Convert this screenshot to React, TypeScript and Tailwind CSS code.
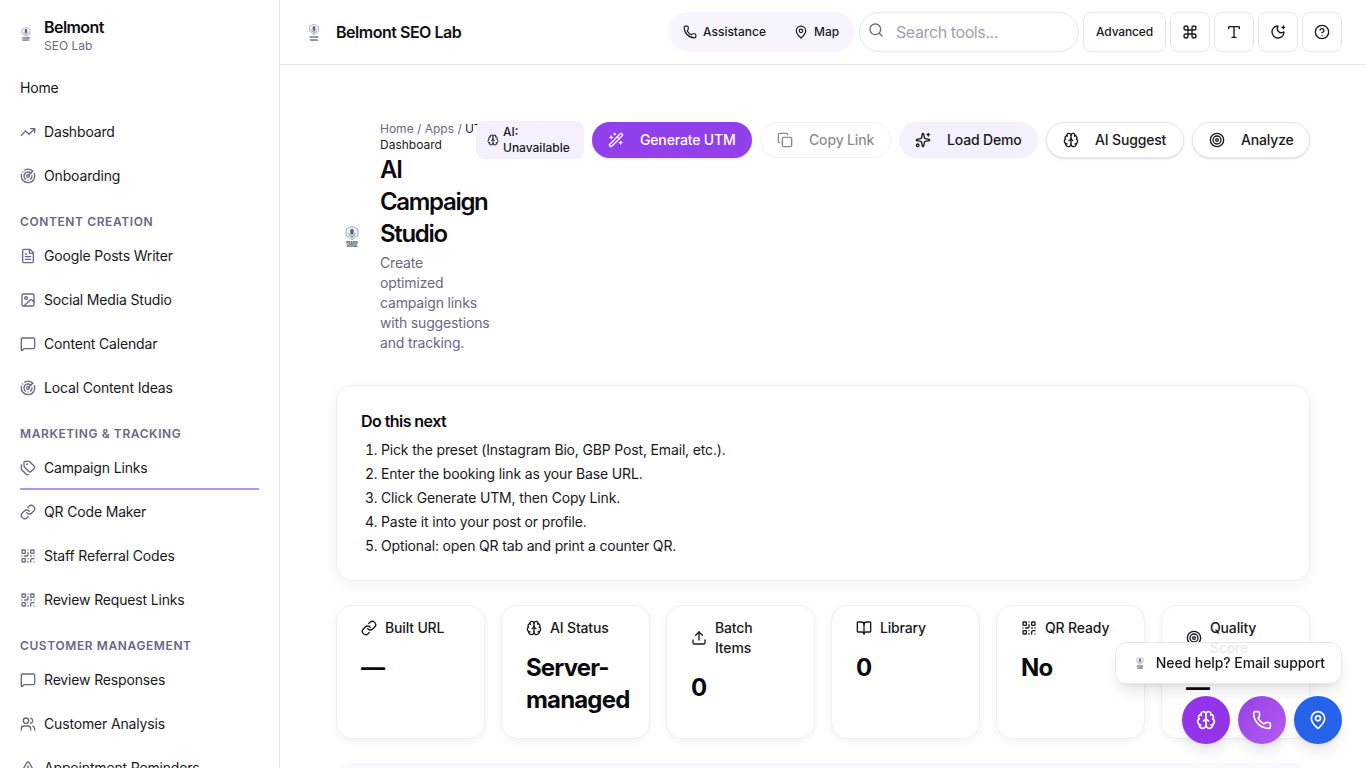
import React from "react";
import {
  Brain,
  CircleHelp,
  Command,
  Copy,
  FileText,
  Image,
  Link,
  MapPin,
  MessageSquare,
  MoonStar,
  Phone,
  QrCode,
  Radar,
  Search,
  Sparkles,
  Tags,
  Target,
  TrendingUp,
  TriangleAlert,
  Type,
  Upload,
  Users,
  WandSparkles,
} from "lucide-react";

type NavItem = { label: string; icon?: React.ElementType; active?: boolean };
type NavGroup = { title?: string; items: NavItem[] };

const navGroups: NavGroup[] = [
  {
    items: [
      { label: "Home" },
      { label: "Dashboard", icon: TrendingUp },
      { label: "Onboarding", icon: Radar },
    ],
  },
  {
    title: "Content Creation",
    items: [
      { label: "Google Posts Writer", icon: FileText },
      { label: "Social Media Studio", icon: Image },
      { label: "Content Calendar", icon: MessageSquare },
      { label: "Local Content Ideas", icon: Radar },
    ],
  },
  {
    title: "Marketing & Tracking",
    items: [
      { label: "Campaign Links", icon: Tags, active: true },
      { label: "QR Code Maker", icon: Link },
      { label: "Staff Referral Codes", icon: QrCode },
      { label: "Review Request Links", icon: QrCode },
    ],
  },
  {
    title: "Customer Management",
    items: [
      { label: "Review Responses", icon: MessageSquare },
      { label: "Customer Analysis", icon: Users },
      { label: "Appointment Reminders", icon: TriangleAlert },
    ],
  },
];

const steps = [
  "Pick the preset (Instagram Bio, GBP Post, Email, etc.).",
  "Enter the booking link as your Base URL.",
  "Click Generate UTM, then Copy Link.",
  "Paste it into your post or profile.",
  "Optional: open QR tab and print a counter QR.",
];

const stats = [
  { label: "Built URL", value: "—", icon: Link },
  { label: "AI Status", value: "Server-managed", icon: Brain },
  { label: "Batch Items", value: "0", icon: Upload },
  { label: "Library", value: "0", icon: BookIcon },
  { label: "QR Ready", value: "No", icon: QrCode },
  { label: "Quality Score", value: "—", icon: Target },
];

function BookIcon({ className }: { className?: string }) {
  return (
    <svg viewBox="0 0 24 24" fill="none" stroke="currentColor" strokeWidth="2" strokeLinecap="round" strokeLinejoin="round" className={className}>
      <path d="M12 7v14" />
      <path d="M3 18a1 1 0 0 1-1-1V4a1 1 0 0 1 1-1h5a4 4 0 0 1 4 4 4 4 0 0 1 4-4h5a1 1 0 0 1 1 1v13a1 1 0 0 1-1 1h-6a3 3 0 0 0-3 3 3 3 0 0 0-3-3z" />
    </svg>
  );
}

// small brand mark, the source page uses an image here
function Logo({ className }: { className?: string }) {
  return (
    <svg viewBox="3 1 18 22" className={className}>
      <path d="M12 1.200l6 2.800v6.400l-6 4.400-6-4.400v-6.400z" fill="#eef1f4" stroke="#7b8899" strokeWidth="0.700" />
      <rect x="10.300" y="3.800" width="3.400" height="6" rx="1.700" fill="#56657a" />
      <path d="M8.800 8.200a3.200 3.200 0 0 0 6.400 0M12 11.400v2" fill="none" stroke="#56657a" strokeWidth="0.700" />
      <text x="12" y="18.600" textAnchor="middle" fontSize="3.200" fontWeight="800" fill="#44546a" fontFamily="Inter, sans-serif">PRAIRIE</text>
      <text x="12" y="22.400" textAnchor="middle" fontSize="3.200" fontWeight="800" fill="#44546a" fontFamily="Inter, sans-serif">SIGNAL</text>
    </svg>
  );
}

function Sidebar() {
  return (
    <aside className="w-[280px] shrink-0 h-full overflow-hidden border-r border-[#e5e7eb] px-5 pt-[15px]">
      <div className="flex items-center gap-3 mb-3">
        <Logo className="w-3 h-[15px] shrink-0" />
        <div>
          <div className="text-base leading-6 font-semibold tracking-[-0.035em] text-[#0f0f14]">Belmont</div>
          <div className="text-xs leading-4 -mt-px tracking-normal text-[#6b6685]">SEO Lab</div>
        </div>
      </div>
      <nav>
        {navGroups.map((group, i) => (
          <div key={i}>
            {group.title && (
              <div className="mt-[16px] mb-[4px] text-xs leading-4 font-semibold uppercase tracking-[0.05em] text-[#6b6685]">
                {group.title}
              </div>
            )}
            {group.items.map((item) => {
              const Icon = item.icon;
              return (
                <div
                  key={item.label}
                  className={`h-11 flex items-center gap-2 text-sm text-[#18181b] whitespace-nowrap ${
                    item.active ? "border-b-2 border-[#b794f0] pt-0.5" : ""
                  }`}
                >
                  {Icon && <Icon className="w-4 h-4 shrink-0 text-[#6b6685]" />}
                  <span>{item.label}</span>
                </div>
              );
            })}
          </div>
        ))}
      </nav>
    </aside>
  );
}

function TopBar() {
  return (
    <header className="h-[65px] shrink-0 flex items-center border-b border-[#e5e7eb] pl-[27px] pr-6">
      <Logo className="w-[14px] h-[17px] shrink-0" />
      <span className="ml-[15px] text-base font-semibold tracking-[-0.03em] text-[#0f0f14]">Belmont SEO Lab</span>
      <div className="ml-auto flex items-center gap-1">
        <div className="h-10 w-[187px] rounded-full bg-[#f8f5ff] flex items-center pl-[15px] text-xs font-medium tracking-normal text-[#18181b]">
          <Phone className="w-[14px] h-[14px]" />
          <span className="ml-1.5">Assistance</span>
          <MapPin className="w-[14px] h-[14px] ml-[28px]" />
          <span className="ml-1.5">Map</span>
        </div>
        <div className="h-10 w-[220px] rounded-full border border-[#e5e7eb] flex items-center pl-2">
          <Search className="w-4 h-4 -mt-1 text-[#6b6685]" />
          <span className="ml-3 text-base tracking-[-0.025em] text-[#9ca3af]">Search tools...</span>
        </div>
        <button className="h-10 w-[83px] rounded-lg border border-[#e5e7eb] text-xs font-medium text-[#18181b]">
          Advanced
        </button>
        {[Command, Type, MoonStar, CircleHelp].map((Icon, i) => (
          <button key={i} className="w-10 h-10 rounded-lg border border-[#e5e7eb] flex items-center justify-center text-[#18181b]">
            <Icon className="w-4 h-4" />
          </button>
        ))}
      </div>
    </header>
  );
}

function PageHeader() {
  return (
    <div className="flex items-start">
      <div className="w-[154px] shrink-0 flex items-center pl-[7px]">
        <Logo className="w-[18px] h-[22px] shrink-0" />
        <div className="ml-[19px] w-[114px] shrink-0">
          <div className="text-xs leading-4 tracking-normal text-[#6b6685]">
            Home / Apps / <span className="text-[#18181b]">UTM Dashboard</span>
          </div>
          <h1 className="mt-px text-2xl leading-8 font-semibold tracking-[-0.055em] text-[#0a0a0f]">AI Campaign Studio</h1>
          <p className="mt-[3px] text-sm leading-5 text-[#6b6685]">
            Create
            <br />
            optimized campaign links with suggestions and tracking.
          </p>
        </div>
      </div>
      <div className="-ml-[14px] w-[834px] shrink-0 flex items-center gap-2">
        <div className="w-[108px] h-[38px] rounded-lg bg-[#f5f0fe] flex items-center pl-[11px] gap-[4px] text-xs leading-4 font-medium tracking-normal text-[#18181b]">
          <Brain className="w-3 h-3 shrink-0" />
          <span>AI: Unavailable</span>
        </div>
        <button className="h-9 w-[160px] rounded-full bg-[#9140ec] text-white text-sm font-medium flex items-center gap-4 pl-4 shadow-sm">
          <WandSparkles className="w-4 h-4" />
          Generate UTM
        </button>
        <button className="h-9 w-[131px] rounded-full border border-[#e5e7eb] bg-white text-sm font-medium flex items-center gap-4 pl-4 text-[#18181b] opacity-50">
          <Copy className="w-4 h-4" />
          Copy Link
        </button>
        <button className="h-9 w-[139px] rounded-full bg-[#f5f0fe] text-sm font-medium flex items-center gap-4 pl-4 text-[#18181b]">
          <Sparkles className="w-4 h-4" />
          Load Demo
        </button>
        <button className="h-9 w-[138px] rounded-full border border-[#e5e7eb] bg-white shadow-sm text-sm font-medium flex items-center gap-4 pl-4 text-[#18181b]">
          <Brain className="w-4 h-4" />
          AI Suggest
        </button>
        <button className="h-9 w-[118px] rounded-full border border-[#e5e7eb] bg-white shadow-sm text-sm font-medium flex items-center gap-4 pl-4 text-[#18181b]">
          <Target className="w-4 h-4" />
          Analyze
        </button>
      </div>
    </div>
  );
}

function NextSteps() {
  return (
    <section className="mt-8 rounded-2xl border border-[#eeeef2] bg-white px-6 pt-[23px] pb-[22px] shadow-[0_4px_20px_rgba(0,0,0,0.05)]">
      <h2 className="text-base leading-6 font-semibold tracking-[-0.035em] text-[#0a0a0f]">Do this next</h2>
      <ol className="mt-[5px] list-decimal pl-5 text-sm leading-6 text-[#18181b]">
        {steps.map((s) => (
          <li key={s}>{s}</li>
        ))}
      </ol>
    </section>
  );
}

function StatCards() {
  return (
    <div className="mt-6 grid grid-cols-6 gap-4">
      {stats.map((s) => {
        const Icon = s.icon;
        return (
          <div key={s.label} className="rounded-2xl border border-[#f0f0f3] bg-white px-6 pt-3 pb-[22px] shadow-[0_2px_8px_rgba(0,0,0,0.05)]">
            <div className="flex items-center gap-2 text-sm leading-5 font-medium text-[#18181b]">
              <Icon className="w-4 h-4 shrink-0" />
              <span>{s.label}</span>
            </div>
            <div className="mt-[14px] text-2xl leading-8 font-bold tracking-[-0.035em] text-[#0a0a0f]">{s.value}</div>
          </div>
        );
      })}
    </div>
  );
}

function FloatingActions() {
  return (
    <div className="fixed right-6 bottom-6 flex flex-col items-end gap-3">
      <div className="h-[42px] rounded-xl border border-[#e5e7eb] bg-white/90 shadow-lg flex items-center pl-[19px] pr-4 gap-[11px] text-sm font-medium tracking-[-0.08px] text-[#18181b]">
        <Logo className="w-[10px] h-3 shrink-0" />
        Need help? Email support
      </div>
      <div className="flex gap-2">
        <button className="w-12 h-12 rounded-full bg-[#9333ea] text-white flex items-center justify-center shadow-lg">
          <Brain className="w-5 h-5" />
        </button>
        <button className="w-12 h-12 rounded-full bg-gradient-to-br from-[#9540e5] to-[#b55bf0] text-white flex items-center justify-center shadow-lg">
          <Phone className="w-5 h-5" />
        </button>
        <button className="w-12 h-12 rounded-full bg-[#2563eb] text-white flex items-center justify-center shadow-lg">
          <MapPin className="w-5 h-5" />
        </button>
      </div>
    </div>
  );
}

export default function App() {
  return (
    <div className="h-screen flex overflow-hidden bg-white tracking-[-0.01em] font-['Inter',sans-serif]">
      <Sidebar />
      <div className="flex-1 min-w-0 flex flex-col">
        <TopBar />
        <main className="flex-1 overflow-hidden px-14 pt-14">
          <PageHeader />
          <NextSteps />
          <StatCards />
          <div className="mt-6 h-40 rounded-2xl bg-[#faf8ff]" />
        </main>
      </div>
      <FloatingActions />
    </div>
  );
}
